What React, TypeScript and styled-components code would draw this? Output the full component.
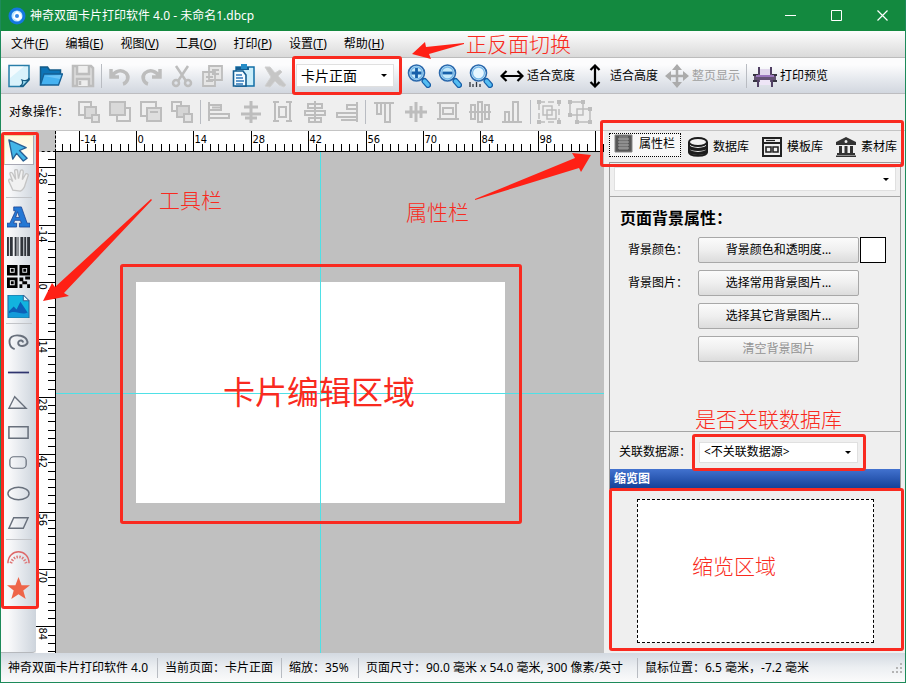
import React from "react";
import styled, { createGlobalStyle, css } from "styled-components";

const RED = "#f92a20";
const GREY = "#bdbdbd";

const GlobalStyle = createGlobalStyle`
  * { box-sizing: border-box; }
  body { margin: 0; background: #efefef; }
  button, select, input { font: inherit; color: inherit; }
`;

const Window = styled.div`
  position: relative;
  display: flex;
  flex-direction: column;
  min-height: 100vh;
  border: 1px solid #1d8a5a;
  border-top: 0;
  background: #efefef;
  color: #000;
  font: 12px/16px "Noto Sans", "Noto Sans CJK SC", sans-serif;
  white-space: nowrap;
`;

const TitleBar = styled.header`
  display: flex;
  align-items: center;
  height: 31px;
  padding: 0 0 0 7px;
  background: #13893f;
  color: #fff;
`;

const Title = styled.h1`
  flex: 1;
  margin: 0 0 0 4px;
  font-size: 12px;
  font-weight: 400;
`;

const WindowButton = styled.button`
  display: grid;
  place-items: center;
  width: 46px;
  height: 31px;
  padding: 0;
  border: 0;
  background: none;
`;

const MenuBar = styled.nav`
  display: flex;
  align-items: center;
  gap: 17px;
  height: 27px;
  padding: 0 10px;
  border-bottom: 1px solid #bcbcbc;
  background: linear-gradient(#fdfdfd, #dadada);
`;

const MenuItem = styled.button`
  padding: 0;
  border: 0;
  background: none;
`;

const ToolBar = styled.div`
  display: flex;
  align-items: center;
  height: 36px;
  padding: 0 6px;
  border-bottom: 1px solid #bdbdc0;
  background: linear-gradient(#fcfcfd 20%, #e6e9ee 60%, #d2d7df);
`;

const ObjectBar = styled(ToolBar)`
  height: 37px;
  padding: 0 8px;
  border-bottom-color: #c4c4c4;
  background: #efefef;
`;

const ToolGroup = styled.div<{ $gap?: number }>`
  display: flex;
  align-items: center;
  gap: ${(p) => p.$gap ?? 8}px;
`;

const ToolButton = styled.button<{ $pad?: number }>`
  display: flex;
  align-items: center;
  gap: 3px;
  padding: 0 ${(p) => p.$pad ?? 0}px 0 0;
  border: 0;
  background: none;
  &:disabled { color: #a0a0a0; }
`;

const Divider = styled.span`
  width: 1px;
  height: 24px;
  margin: 0 6px;
  background: #b9bcc2;
`;

const ObjectLabel = styled.span`
  width: 68px;
`;

const Marked = styled.div<{ $out: string; $margin?: string }>`
  position: relative;
  margin: ${(p) => p.$margin ?? "0"};
  &::after {
    content: "";
    position: absolute;
    inset: ${(p) => p.$out};
    z-index: 4;
    border: 3px solid ${RED};
    border-radius: 3px;
    pointer-events: none;
  }
`;

const SelectShell = styled.span<{ $width: string; $height: number }>`
  position: relative;
  display: flex;
  align-items: center;
  width: ${(p) => p.$width};
  height: ${(p) => p.$height}px;
  border: 1px solid #e0e0e0;
  background: #fff;
`;

const Select = styled.select<{ $large?: boolean }>`
  appearance: none;
  width: 100%;
  height: 100%;
  padding: 0 20px 0 4px;
  border: 0;
  background: transparent;
  outline: none;
  ${(p) => p.$large && css`font-size: 14px;`}
`;

const Caret = styled.span`
  position: absolute;
  right: 6px;
  border: 3px solid transparent;
  border-top-color: #000;
  border-bottom: 0;
  pointer-events: none;
`;

const Body = styled.main`
  display: flex;
  flex: 1;
  min-height: 522px;
`;

const ToolBoxMark = styled(Marked)`
  flex: 0 0 35px;
`;

const ToolBox = styled.div`
  display: flex;
  flex-direction: column;
  align-items: center;
  height: 100%;
  padding-top: 4px;
  border-radius: 0 0 4px 0;
  border-bottom: 1px solid #b5b8bc;
  background: linear-gradient(90deg, #fafafb 20%, #e3e7ec 60%, #cdd4dc);
`;

const BoxButton = styled.button<{ $active?: boolean }>`
  display: grid;
  place-items: center;
  width: 30px;
  height: 30px;
  padding: 0;
  border: 1px solid transparent;
  background: none;
  ${(p) => p.$active && css`
    border-color: #e8d9a0 #a9a9b4 #a9a9b4 #e8d9a0;
    background: linear-gradient(#fff8dc, #fff);
  `}
`;

const BoxRule = styled.span`
  width: 26px;
  height: 1px;
  margin: 2px 0 3px;
  background: #c2c4c8;
`;

const Work = styled.section`
  display: grid;
  flex: 1;
  grid-template: 21px 1fr / 20px 1fr;
  min-width: 0;
`;

const Corner = styled.span`
  border-right: 1px dashed #000;
  border-bottom: 1px dashed #000;
  background: #c4c4c4;
`;

const RulerTop = styled.div`
  position: relative;
  height: 21px;
  overflow: hidden;
  border-bottom: 1px solid #000;
  background: #fff;
`;

const RulerLeft = styled(RulerTop)`
  height: auto;
  border-bottom: 0;
  border-right: 1px solid #000;
`;

const RulerArt = styled.svg`
  position: absolute;
  inset: 0;
  font: 11px "DejaVu Sans Condensed", "DejaVu Sans", sans-serif;
`;

const Canvas = styled.div`
  position: relative;
  overflow: hidden;
  background: #c0c0c0;
`;

const Card = styled.div`
  position: absolute;
  left: 80px;
  top: 130px;
  width: 369px;
  height: 221px;
  background: #fff;
`;

const CardMark = styled.div`
  position: absolute;
  left: 64px;
  top: 112px;
  width: 402px;
  height: 260px;
  border: 3px solid ${RED};
  border-radius: 3px;
`;

const GuideV = styled.span`
  position: absolute;
  left: 264px;
  top: 0;
  bottom: 0;
  width: 1px;
  background: #4fe0e6;
`;

const GuideH = styled.span`
  position: absolute;
  top: 241px;
  left: 0;
  right: 0;
  height: 1px;
  background: #4fe0e6;
`;

const Note = styled.span<{ $x: number; $y: number; $big?: boolean }>`
  position: absolute;
  left: ${(p) => p.$x}px;
  top: ${(p) => p.$y}px;
  z-index: 5;
  color: ${RED};
  font-size: ${(p) => (p.$big ? 32 : 21)}px;
  line-height: ${(p) => (p.$big ? 40 : 28)}px;
  font-family: "Noto Sans CJK SC", sans-serif;
  font-weight: ${(p) => (p.$big ? 400 : 300)};
`;

const Arrows = styled.svg`
  position: absolute;
  left: 0;
  top: 0;
  z-index: 5;
  pointer-events: none;
`;

const Side = styled.aside`
  display: flex;
  flex: 0 0 301px;
  flex-direction: column;
  min-width: 0;
  padding: 2px 4px 3px 5px;
`;

const Tabs = styled.div`
  display: flex;
  gap: 2px;
  height: 29px;
  margin-right: -2px;
`;

const Tab = styled.button<{ $active?: boolean }>`
  display: flex;
  flex: 1 1 0;
  align-items: center;
  gap: 5px;
  min-width: 0;
  height: 24px;
  padding: ${(p) => (p.$active ? "0 0 3px 4px" : "3px 0 0 4px")};
  border: 1px ${(p) => (p.$active ? "dotted #000" : "solid transparent")};
  background: ${(p) => (p.$active ? "#f7f7f7" : "none")};
`;

const Page = styled.div`
  display: flex;
  flex: 1;
  flex-direction: column;
  border: 1px solid #9a9a9a;
  border-width: 1px 1px 0;
`;

const ObjectPicker = styled.div`
  padding: 4px 4px 5px;
  border-bottom: 1px solid #a5a5a5;
`;

const Properties = styled.section`
  flex: 1;
  padding: 9px 10px;
  border-bottom: 1px solid #a5a5a5;
`;

const Heading = styled.h2`
  margin: 0 0 7px;
  font-size: 16px;
  line-height: 24px;
  font-weight: 700;
`;

const PropertyGrid = styled.div`
  display: grid;
  grid-template-columns: 62px 161px 25px;
  column-gap: 1px;
  row-gap: 7px;
  align-items: center;
  padding-left: 8px;
  & > label { grid-column: 1; }
`;

const PropButton = styled.button`
  grid-column: 2;
  margin-left: 7px;
  width: 161px;
  height: 26px;
  padding: 0;
  border: 1px solid #a8a8a8;
  border-radius: 2px;
  background: linear-gradient(#fbfbfb, #efefef 50%, #dcdcdc);
  &:disabled { color: #939393; }
`;

const Swatch = styled.input`
  appearance: none;
  width: 26px;
  height: 26px;
  margin-left: 7px;
  padding: 0;
  border: 1px solid #000;
  background: #fff;
  &::-webkit-color-swatch-wrapper { padding: 0; }
  &::-webkit-color-swatch { border: 0; }
`;

const SourceRow = styled.div`
  position: relative;
  display: flex;
  align-items: center;
  height: 37px;
  padding: 3px 0 0 9px;
`;

const SourceLabel = styled.label`
  width: 80px;
`;

const PreviewTitle = styled.h2`
  height: 20px;
  margin: 0;
  padding: 1px 4px;
  background: linear-gradient(#4272cf, #123f96);
  color: #fff;
  font-size: 12px;
  line-height: 18px;
  font-weight: 700;
`;

const Preview = styled.div`
  height: 161px;
  padding: 10px 27px 7px 28px;
`;

const PreviewCard = styled.div`
  height: 144px;
  border: 1px dashed #000;
  background: #fff;
`;

const StatusBar = styled.footer`
  display: flex;
  align-items: center;
  height: 29px;
  padding: 0 2px 0 7px;
  background: linear-gradient(#d3d9e1, #eceff2 50%, #fbfbfb);
`;

const StatusItem = styled.span<{ $width: number }>`
  min-width: ${(p) => p.$width}px;
  margin-right: 7px;
  border-right: ${(p) => (p.$width ? "1px solid #b8bcc2" : "0")};
  line-height: 20px;
  &:nth-last-child(2) { flex: 1; }
`;

type ArtProps = { children: React.ReactNode; w?: number; h?: number; box?: string };
const Art = ({ children, w = 24, h = 24, box }: ArtProps) => (
  <svg width={w} height={h} viewBox={box ?? `0 0 ${w} ${h}`} fill="none" aria-hidden="true">
    {children}
  </svg>
);

const FILE_ICONS: { name: string; off?: boolean; art: React.ReactNode }[] = [
  { name: "新建", art: <><path d="M2 1.500h20v14l-6 7H2z" fill="#d9f2fb" stroke="#287da9" strokeWidth="1.500" /><path d="M3 2.500h14L3 14z" fill="#fff" opacity=".7" /><path d="M13 22c3-1 3-4 2-6 3 1 6 1 7-2v2l-6 6z" fill="#9bdcf2" stroke="#155b83" strokeWidth="1.300" /></> },
  { name: "打开", art: <><path d="M1.500 21V3h7l2 3h11v5" fill="#0e74b7" stroke="#145b88" strokeWidth="1.500" /><path d="M1.500 21 5 10h18.500l-4 11z" fill="#46b2f1" stroke="#155f95" strokeWidth="1.300" /><path d="m5 12 17-1-1 4z" fill="#87d1fa" opacity=".6" /></> },
  { name: "保存", off: true, art: <g stroke={GREY} strokeWidth="2.500"><path d="M2 2h18l2 2v18H2z" fill="#dedede" /><path d="M6 2v8h12V2M6 22v-7h12v7" fill="#eee" /><path d="M9 17v4" /></g> },
];

const EDIT_ICONS = [
  { name: "撤销", art: <path d="M3 5v8h8M4 12c3-5 9-7 14-3 4 4 1 10-3 11" stroke={GREY} strokeWidth="3.500" /> },
  { name: "重做", art: <path d="M21 5v8h-8M20 12C17 7 11 5 6 9c-4 4-1 10 3 11" stroke={GREY} strokeWidth="3.500" /> },
  { name: "剪切", art: <g stroke={GREY} strokeWidth="2.500"><path d="m6 2 10 15M18 2 8 17" /><circle cx="6" cy="19" r="3" /><circle cx="18" cy="19" r="3" /></g> },
  { name: "复制", art: <g stroke={GREY} strokeWidth="1.800" fill="#e6e6e6"><path d="M8 2h13v14H8zM2 8h12v14H2z" /><path d="M11 6h7M11 10h7M5 13h7M5 17h7" /></g> },
];

const PASTE = <><path d="M4 3h18v19H4z" fill="#cbeefa" stroke="#126fa7" strokeWidth="1.500" /><path d="M4 3h13v3H4z" fill="#145d91" /><path d="M9 0h6v5H9z" fill="#258bc6" /><path d="M1.500 7H11l3 4v11H1.500z" fill="#f3fcff" stroke="#145d91" strokeWidth="1.600" /><path d="M4 11h6M4 14h7M4 17h8M4 20h7" stroke="#3278bb" strokeWidth="1.300" /></>;
const DELETE = <path d="M2 3h5l5 6 5-3 2 2-4 4 8 9-2 2-5-2-4-4-5 6-5-1 6-9z" fill="#c6c6c6" stroke="#d0d0d0" />;

const Magnifier = ({ kind }: { kind: "in" | "out" | "actual" }) => (
  <Art>
    <circle cx="9.500" cy="9" r="8" fill={kind === "actual" ? "#e6f6ff" : "#c6e9fb"} stroke="#2b69ad" strokeWidth="1.600" />
    <circle cx="9.500" cy="9" r="6" stroke="#77b8e8" strokeWidth="1.300" />
    {kind !== "actual" && <path d={kind === "in" ? "M4.500 9h10M9.500 4v10" : "M4.500 9h10"} stroke="#1760aa" strokeWidth="2.800" />}
    <path d="m15 14 2.500 2" stroke="#1f67a8" strokeWidth="2" />
    <path d="m17.500 17 3.500 4" stroke="#165fa9" strokeWidth="6" strokeLinecap="round" />
    <path d="m17.500 17 3.500 4" stroke="#55bdf2" strokeWidth="3.500" strokeLinecap="round" />
    {kind === "actual" && <path d="M1 18v5M4 20v3M7.500 18v5M11 20v3" stroke="#303640" strokeWidth="1.300" />}
  </Art>
);

const OBJECT_GROUPS = [
  [
    { name: "置于顶层", art: <g stroke={GREY} strokeWidth="2"><path d="M2 2h12v13H2z" /><path d="M8 7h11v11H8z" fill="#d9d9d9" /><path d="M15 15h7v7h-7z" fill="#e4e4e4" /></g> },
    { name: "置于底层", art: <g stroke={GREY} strokeWidth="2"><path d="M9 8h13v13H9z" /><path d="M2 2h15v13H2z" fill="#d9d9d9" /></g> },
    { name: "上移一层", art: <g stroke={GREY} strokeWidth="2"><path d="M2 2h15v14H2z" /><path d="M8 8h14v13H8z" fill="#dedede" /><path d="M11 12h8" /></g> },
    { name: "下移一层", art: <g stroke={GREY} strokeWidth="2"><path d="M2 2h9v9H2z" /><path d="M7 6h12v11H7z" fill="#d5d5d5" /><path d="M14 14h8v8h-8z" fill="#e4e4e4" /></g> },
  ],
  [
    { name: "左对齐", art: <path d="M2 2v19M2 5h12v5H2M2 14h20v4H2M5 7.500h9" stroke={GREY} strokeWidth="2" /> },
    { name: "水平居中", art: <path d="M12 1v22M5 7h14M2 14h20M6 18h12" stroke={GREY} strokeWidth="3" /> },
    { name: "等宽", art: <path d="M4 1v21M19 1v21M2 2h6M15 2h6M2 21h6M15 21h6M8 7v10h7V7z" stroke={GREY} strokeWidth="2" /> },
    { name: "水平分布", art: <path d="M12 1v22M5 4h14v4H5zM2 11h20v4H2zM6 18h12v4H6z" stroke={GREY} strokeWidth="2" /> },
    { name: "右对齐", art: <path d="M22 2v20M22 5H12v4h10M22 13H2v4h20M22 20H6" stroke={GREY} strokeWidth="2" /> },
  ],
  [
    { name: "顶对齐", art: <path d="M2 3h20M5 3v11h4V3M13 3v19h5V3" stroke={GREY} strokeWidth="2" /> },
    { name: "垂直居中", art: <path d="M1 12h22M7 6v12M12 2v20M17 6v12" stroke={GREY} strokeWidth="3" /> },
    { name: "等高", art: <path d="M1 3h22M1 19h22M4 3v16M20 3v16M7 8h10v6H7z" stroke={GREY} strokeWidth="2" /> },
    { name: "垂直分布", art: <path d="M1 12h22M3 5v14h4V5zM10 2v20h4V2zM17 5v14h4V5z" stroke={GREY} strokeWidth="2" /> },
    { name: "底对齐", art: <path d="M2 22h20M5 22V12h4v10M13 22V2h5v20" stroke={GREY} strokeWidth="2" /> },
  ],
  [
    { name: "组合", art: <g stroke={GREY} strokeWidth="1.500"><path d="M2 2h20v20H2z" strokeDasharray="6 3" /><path d="M6 6h9v9H6zM10 10h9v9h-9z" /><path d="M0 0h4v4H0zM20 0h4v4h-4zM0 20h4v4H0zM20 20h4v4h-4z" fill={GREY} stroke="none" /></g> },
    { name: "取消组合", art: <g stroke={GREY} strokeWidth="1.500"><path d="M2 2h13v13H2zM9 9h13v13H9z" /><path d="M0 0h4v4H0zM13 0h4v4h-4zM0 13h4v4H0zM20 7h4v4h-4zM7 20h4v4H7zM20 20h4v4h-4z" fill={GREY} stroke="none" /></g> },
  ],
];

const LINE = "#68707c";
const DRAW_GROUPS = [
  [
    { name: "选择", art: <path d="m2 1 18 8-7 3 8 8-4 3-7-8-4 6z" fill="#43b5e8" stroke="#285f94" strokeWidth="1.400" strokeLinejoin="round" /> },
    { name: "平移", art: <path d="M6 22 2 13c-1-3 2-3 3-1l1 1L3 5c0-2 2-2 3 0l3 6L8 2c0-2 3-2 3 0l1 8 2-8c1-2 3-1 3 1l-1 8 3-5c1-2 4-1 3 1l-3 9c-1 5-3 6-5 7z" fill="#f1f1f1" stroke="#c4c4c4" strokeWidth="1.400" /> },
  ],
  [
    { name: "文字", art: <path fillRule="evenodd" d="M9 2h6l6 17h3v4H13v-4h2l-1-3H8l-1 3h3v4H0v-4h3L9 6H7V2zm2 5-2 6h4z" fill="#2578d5" stroke="#173f8f" strokeWidth=".8" /> },
    { name: "条形码", art: <path d="M0 2h2v20H0zM3 2h3v20H3zM8 2h2v20H8zM11 2h1v20h-1zM14 2h3v20h-3zM18 2h2v20h-2zM21 2h3v20h-3z" fill="#30343b" /> },
    { name: "二维码", art: <><path d="M1.500 1.500h8v8h-8zM14.500 1.500h8v8h-8zM1.500 14.500h8v8h-8z" stroke="#000" strokeWidth="3" /><path d="M4 4h3v3H4zM17 4h3v3h-3zM4 17h3v3H4zM13 13h4v4h-4zM19 12h5v3h-5zM16 17h5v3h-5zM13 20h3v4h-3zM21 20h3v4h-3z" fill="#000" /></> },
    { name: "图片", art: <><path d="M1 0h16l6 6v18H1z" fill="#12b4df" stroke="#2a5d91" /><path d="M2 17l5-5 3 3 4-8 8 12v4H2z" fill="#0c60b8" /><path d="M2 19c7-4 13 3 20-1v5H2z" fill="#139bda" /><path d="M17 0v6h6z" fill="#e8faff" stroke="#2a5d91" /></> },
  ],
  [
    { name: "曲线", art: <path d="M8 19c-6-2-7-10-3-13 5-3 14-1 16 4 2 4-4 7-8 5-4-3 2-8 4-3" stroke={LINE} strokeWidth="2" /> },
    { name: "直线", art: <path d="M1 12h22" stroke="#30356f" strokeWidth="1.800" /> },
    { name: "三角形", art: <path d="M8 6 2 18h18z" stroke={LINE} strokeWidth="1.400" /> },
    { name: "矩形", art: <path d="M2 6h20v12H2z" stroke={LINE} strokeWidth="1.600" /> },
    { name: "圆角矩形", art: <rect x="3" y="6" width="17" height="12" rx="4" stroke={LINE} strokeWidth="1.300" /> },
    { name: "椭圆", art: <ellipse cx="12" cy="13" rx="11" ry="6.500" stroke={LINE} strokeWidth="1.500" /> },
    { name: "平行四边形", art: <path d="M7 7h15l-5 11H2z" stroke={LINE} strokeWidth="1.500" /> },
  ],
  [
    { name: "弧形文字", art: <><path d="M1 17C1 1 23 1 23 17" stroke="#de6869" strokeWidth="1.500" /><path d="M4 17C7 8 17 8 20 17" stroke="#df7777" strokeWidth="3" strokeDasharray="1.500 1.500" /></> },
    { name: "五角星", art: <path d="m12 0 3.200 8.500 8.800.2-7 5.500 2.500 8.800L12 18l-7.500 5L7 14.200 0 8.700l8.800-.2z" fill="#ee6549" /> },
  ],
];

const TABS = [
  { name: "属性栏", art: <><path d="M1 1h17v17H1z" fill="#565656" stroke="#888" /><path d="M5 2h9v14H5z" fill="#747474" /><path d="M4 5h11M4 8h11M4 11h11M4 14h11" stroke="#a9a9a9" /></> },
  { name: "数据库", art: <g stroke="#1c1c1c" strokeWidth="2"><path d="M1 5v10c0 5 18 5 18 0V5" fill="#eee" /><path d="M1 9c0 4.500 18 4.500 18 0M1 13c0 4.500 18 4.500 18 0" strokeWidth="3" /><ellipse cx="10" cy="5" rx="9" ry="4" fill="#f2f2f2" /></g> },
  { name: "模板库", art: <g stroke="#222"><path d="M1 1h18v18H1zM1 6h18" strokeWidth="2" /><path d="M4 10h5v5H4zM11 10h5v5h-5z" strokeWidth="1.600" /><path d="M4 3.500h9" strokeWidth="1.200" /></g> },
  { name: "素材库", art: <g fill="#333"><path fillRule="evenodd" d="M10 0 20 5v3H0V5zm0 3a1.500 1.500 0 1 0 0 3 1.500 1.500 0 0 0 0-3z" /><path d="M3 9h3v7H3zM8.500 9h3v7h-3zM14 9h3v7h-3zM1 16h18v2H1zM0 18.500h20V20H0z" /></g> },
];

const MENUS: [string, string][] = [["文件", "F"], ["编辑", "E"], ["视图", "V"], ["工具", "O"], ["打印", "P"], ["设置", "T"], ["帮助", "H"]];

/* Ruler scale: 14 mm span between numbered ticks, seven divisions each. */
const STEP = 57.4;

type RulerProps = { origin: number; last: number; vertical?: boolean };
const Ruler = ({ origin, last, vertical }: RulerProps) => (
  <RulerArt width="100%" height="100%" aria-hidden="true">
    {Array.from({ length: 300 }, (_, i) => i - 15).map((n) => {
      const at = Math.round(origin + (n * STEP) / 7) + 0.5;
      const major = n % 7 === 0;
      const numbered = major && n >= (vertical ? -14 : -7) && n * 2 <= last;
      return vertical ? (
        <g key={n}>
          <path d={`M${major ? 0 : 12} ${at}h20`} stroke="#000" />
          {numbered && <text transform={`translate(3 ${at + 1}) rotate(90)`}>{n * 2}</text>}
        </g>
      ) : (
        <g key={n}>
          <path d={`M${at} ${major ? 0 : 13}v21`} stroke="#000" />
          {numbered && <text x={at + 1} y="12">{n * 2}</text>}
        </g>
      );
    })}
  </RulerArt>
);

export default function App() {
  return (
    <Window>
      <GlobalStyle />
      <TitleBar>
        <Art w={18} h={18}>
          <circle cx="9" cy="9" r="8.500" fill="#1377df" />
          <circle cx="9" cy="9" r="5.500" fill="#b8e4ff" />
          <path d="m6 7 3-3 4 3 1 4-4 3-5-3z" fill="#fff" />
          <circle cx="9" cy="9" r="2" fill="#3487e5" />
        </Art>
        <Title>神奇双面卡片打印软件 4.0 - 未命名1.dbcp</Title>
        <WindowButton aria-label="最小化"><Art w={11} h={11}><path d="M0 5.500h11" stroke="#fff" /></Art></WindowButton>
        <WindowButton aria-label="最大化"><Art w={11} h={11}><path d="M.5.5h10v10H.5z" stroke="#fff" /></Art></WindowButton>
        <WindowButton aria-label="关闭"><Art w={11} h={11}><path d="m.5.5 10 10m0-10-10 10" stroke="#fff" strokeWidth="1.200" /></Art></WindowButton>
      </TitleBar>

      <MenuBar aria-label="主菜单">
        {MENUS.map(([name, key]) => (
          <MenuItem key={name}>{name}(<u>{key}</u>)</MenuItem>
        ))}
      </MenuBar>

      <ToolBar>
        <ToolGroup>
          {FILE_ICONS.map((i) => (
            <ToolButton key={i.name} aria-label={i.name} disabled={i.off}><Art>{i.art}</Art></ToolButton>
          ))}
        </ToolGroup>
        <Divider />
        <ToolGroup $gap={7}>
          {EDIT_ICONS.map((i) => (
            <ToolButton key={i.name} aria-label={i.name} disabled><Art>{i.art}</Art></ToolButton>
          ))}
          <ToolButton aria-label="粘贴"><Art>{PASTE}</Art></ToolButton>
          <ToolButton aria-label="删除" disabled><Art>{DELETE}</Art></ToolButton>
        </ToolGroup>
        <Marked $out="-8px -8px -8px -4px" $margin="0 0 0 9px">
          <SelectShell $width="98px" $height={23}>
            <Select $large aria-label="卡片面"><option>卡片正面</option><option>卡片反面</option></Select>
            <Caret />
          </SelectShell>
        </Marked>
        <Divider />
        <ToolGroup $gap={7}>
          <ToolButton aria-label="放大"><Magnifier kind="in" /></ToolButton>
          <ToolButton aria-label="缩小"><Magnifier kind="out" /></ToolButton>
          <ToolButton aria-label="实际大小"><Magnifier kind="actual" /></ToolButton>
          <ToolButton $pad={5}>
            <Art><path d="M1 12h22M6.500 7l-5 5 5 5M17.500 7l5 5-5 5" stroke="#000" strokeWidth="2.200" /></Art>适合宽度
          </ToolButton>
          <ToolButton>
            <Art w={20}><path d="M8 1v22M3.500 6 8 1.500 12.500 6M3.500 18 8 22.500l4.500-4.500" stroke="#000" strokeWidth="2.200" /></Art>适合高度
          </ToolButton>
          <ToolButton disabled>
            <Art><path d="M12 3v18M3 12h18" stroke="#ababab" strokeWidth="2.500" /><path d="m12 0 5 6H7zM12 24l5-6H7zM0 12l6-5v10zM24 12l-6-5v10z" fill="#ababab" /></Art>整页显示
          </ToolButton>
        </ToolGroup>
        <Divider />
        <ToolButton>
          <Art>
            <path d="M1 10h22v8H1z" fill="#645274" /><path d="M0 11h5M19 11h5M0 17h5M19 17h5" stroke="#363340" strokeWidth="2" />
            <path d="M6 3v7M18 3v7M5 16v7M19 16v7" stroke="#514064" strokeWidth="2" /><path d="M7 5h10v6H7z" fill="#e1d7ec" />
            <path d="M3 12h18" stroke="#9b77be" strokeWidth="2" /><path d="M7 16h10v5H7z" fill="#eee5f6" />
          </Art>
          打印预览
        </ToolButton>
      </ToolBar>

      <ObjectBar>
        <ObjectLabel>对象操作：</ObjectLabel>
        {OBJECT_GROUPS.map((group, n) => (
          <React.Fragment key={n}>
            {n > 0 && <Divider />}
            <ToolGroup $gap={n === 0 || n === 3 ? 7 : 8}>
              {group.map((i) => (
                <ToolButton key={i.name} aria-label={i.name} disabled><Art>{i.art}</Art></ToolButton>
              ))}
            </ToolGroup>
          </React.Fragment>
        ))}
      </ObjectBar>

      <Body>
        <ToolBoxMark $out="1px -3px 44px 0px">
          <ToolBox>
            {DRAW_GROUPS.map((group, n) => (
              <React.Fragment key={n}>
                {n > 0 && <BoxRule />}
                {group.map((i) => (
                  <BoxButton key={i.name} aria-label={i.name} $active={i.name === "选择"} disabled={i.name === "平移"}>
                    <Art w={23} h={23} box="0 0 24 24">{i.art}</Art>
                  </BoxButton>
                ))}
              </React.Fragment>
            ))}
          </ToolBox>
        </ToolBoxMark>

        <Work>
          <Corner />
          <RulerTop><Ruler origin={80} last={98} /></RulerTop>
          <RulerLeft><Ruler origin={130} last={84} vertical /></RulerLeft>
          <Canvas>
            <Card />
            <GuideV />
            <GuideH />
            <CardMark />
            <Note $x={103} $y={33}>工具栏</Note>
            <Note $x={350} $y={45}>属性栏</Note>
            <Note $x={167} $y={218} $big>卡片编辑区域</Note>
          </Canvas>
        </Work>

        <Side>
          <Marked $out="-13px -3px -5px -9px">
            <Tabs role="tablist">
              {TABS.map((t, n) => (
                <Tab key={t.name} role="tab" aria-selected={n === 0} $active={n === 0}>
                  <Art w={20} h={20}>{t.art}</Art>{t.name}
                </Tab>
              ))}
            </Tabs>
          </Marked>
          <Page>
            <ObjectPicker>
              <SelectShell $width="100%" $height={24}>
                <Select aria-label="选择对象"><option></option></Select>
                <Caret />
              </SelectShell>
            </ObjectPicker>
            <Properties>
              <Heading>页面背景属性：</Heading>
              <PropertyGrid>
                <label htmlFor="bg-color">背景颜色：</label>
                <PropButton id="bg-color">背景颜色和透明度...</PropButton>
                <Swatch type="color" defaultValue="#ffffff" aria-label="当前背景颜色" />
                <label htmlFor="bg-image">背景图片：</label>
                <PropButton id="bg-image">选择常用背景图片...</PropButton>
                <PropButton>选择其它背景图片...</PropButton>
                <PropButton disabled>清空背景图片</PropButton>
              </PropertyGrid>
            </Properties>
            <SourceRow>
              <SourceLabel htmlFor="source">关联数据源：</SourceLabel>
              <Marked $out="-8px -8px -8px -7px">
                <SelectShell $width="159px" $height={21}>
                  <Select id="source"><option>&lt;不关联数据源&gt;</option></Select>
                  <Caret />
                </SelectShell>
              </Marked>
              <Note $x={85} $y={-28}>是否关联数据库</Note>
            </SourceRow>
            <PreviewTitle>缩览图</PreviewTitle>
          </Page>
          <Marked $out="-1px -3px -1px 0px">
            <Preview><PreviewCard /></Preview>
            <Note $x={83} $y={62}>缩览区域</Note>
          </Marked>
        </Side>
      </Body>

      <StatusBar>
        <StatusItem $width={150}>神奇双面卡片打印软件 4.0</StatusItem>
        <StatusItem $width={117}>当前页面：卡片正面</StatusItem>
        <StatusItem $width={70}>缩放：35%</StatusItem>
        <StatusItem $width={272}>页面尺寸：90.0 毫米 x 54.0 毫米, 300 像素/英寸</StatusItem>
        <StatusItem $width={0}>鼠标位置：6.5 毫米，-7.2 毫米</StatusItem>
        <Art w={12} h={12}><path d="M9 1h2v2H9zM9 5h2v2H9zM9 9h2v2H9zM5 5h2v2H5zM5 9h2v2H5zM1 9h2v2H1z" fill="#b4b4b4" /></Art>
      </StatusBar>

      <Note $x={465} $y={29}>正反面切换</Note>
      <Arrows width="620" height="320" aria-hidden="true">
        <g fill="#ff2015">
          <path d="m411 54 13-12 1 5 38-4v1l-35 10 2 5z" />
          <path d="m42 301 9-18 3 4 96-88 1 1-88 93 5 3z" />
          <path d="m590 155-19-2 3 5-100 41v1l104-32 2 4z" />
        </g>
      </Arrows>
    </Window>
  );
}
